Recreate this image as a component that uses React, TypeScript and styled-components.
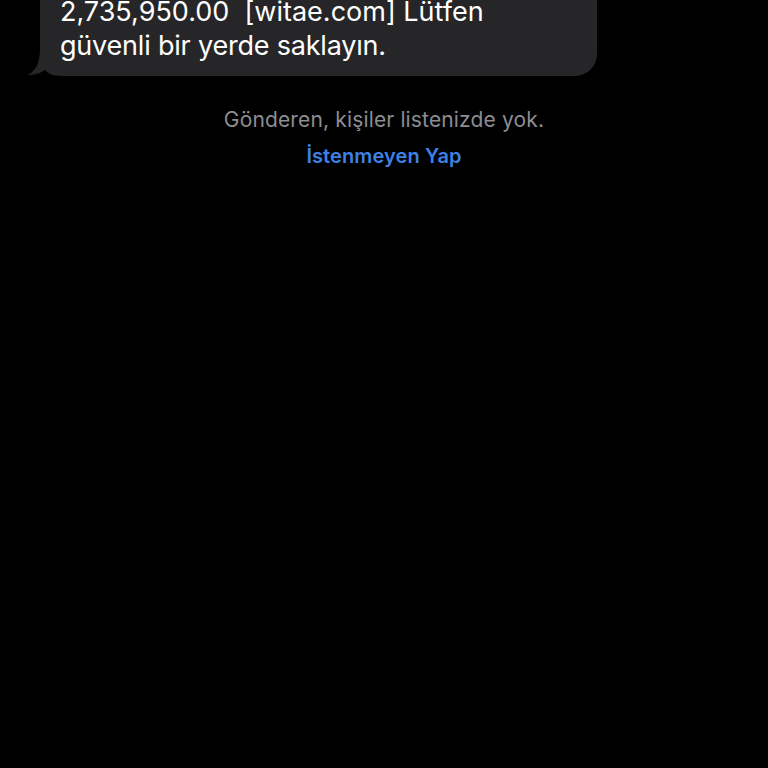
import styled, { createGlobalStyle } from "styled-components"

const GlobalStyle = createGlobalStyle`
    html, body {
        margin: 0;
        padding: 0;
        background: #000;
    }
    body {
        font-family: Inter, "Liberation Sans", sans-serif;
        -webkit-font-smoothing: antialiased;
    }
`

const Screen = styled.div`
    width: 768px;
    height: 768px;
    overflow: hidden;
    background: #000;
    display: flex;
    flex-direction: column;
`

const BubbleRow = styled.div`
    display: flex;
    padding-left: 40px;
`

const Bubble = styled.div`
    position: relative;
    width: 557px;
    box-sizing: border-box;
    margin-top: -5px;
    padding: 0 20px 13px 20px;
    background: #262628;
    border-radius: 0 0 22px 22px;
    color: #fff;
    font-size: 27px;
    line-height: 34px;
`

const SecondLine = styled.span`
    letter-spacing: -0.2px;
`

const Tail = styled.svg`
    position: absolute;
    left: -13px;
    bottom: 0;
`

const Notice = styled.div`
    margin-top: 32px;
    display: flex;
    flex-direction: column;
    align-items: center;
    gap: 12px;
`

const NoticeText = styled.div`
    color: #8d8d92;
    font-size: 21px;
    line-height: 24px;
    letter-spacing: 0.15px;
`

const SpamLink = styled.div`
    color: #3c82e6;
    font-size: 20px;
    font-weight: 600;
    line-height: 24px;
    letter-spacing: 0.1px;
`

function App() {
    return (
        <>
            <GlobalStyle />
            <Screen>
                <BubbleRow>
                    <Bubble>
                        2,735,950.00&nbsp; [witae.com] Lütfen
                        <br />
                        <SecondLine>güvenli bir yerde saklayın.</SecondLine>
                        <Tail width="30" height="28" viewBox="0 0 30 28">
                            <path d="M13 0 L30 0 L30 28 C24 27 20 24 18 22 C14 25 8 27 0 27 C8 24 13 16 13 0 Z" fill="#262628" />
                        </Tail>
                    </Bubble>
                </BubbleRow>
                <Notice>
                    <NoticeText>Gönderen, kişiler listenizde yok.</NoticeText>
                    <SpamLink>İstenmeyen Yap</SpamLink>
                </Notice>
            </Screen>
        </>
    )
}

export default App
